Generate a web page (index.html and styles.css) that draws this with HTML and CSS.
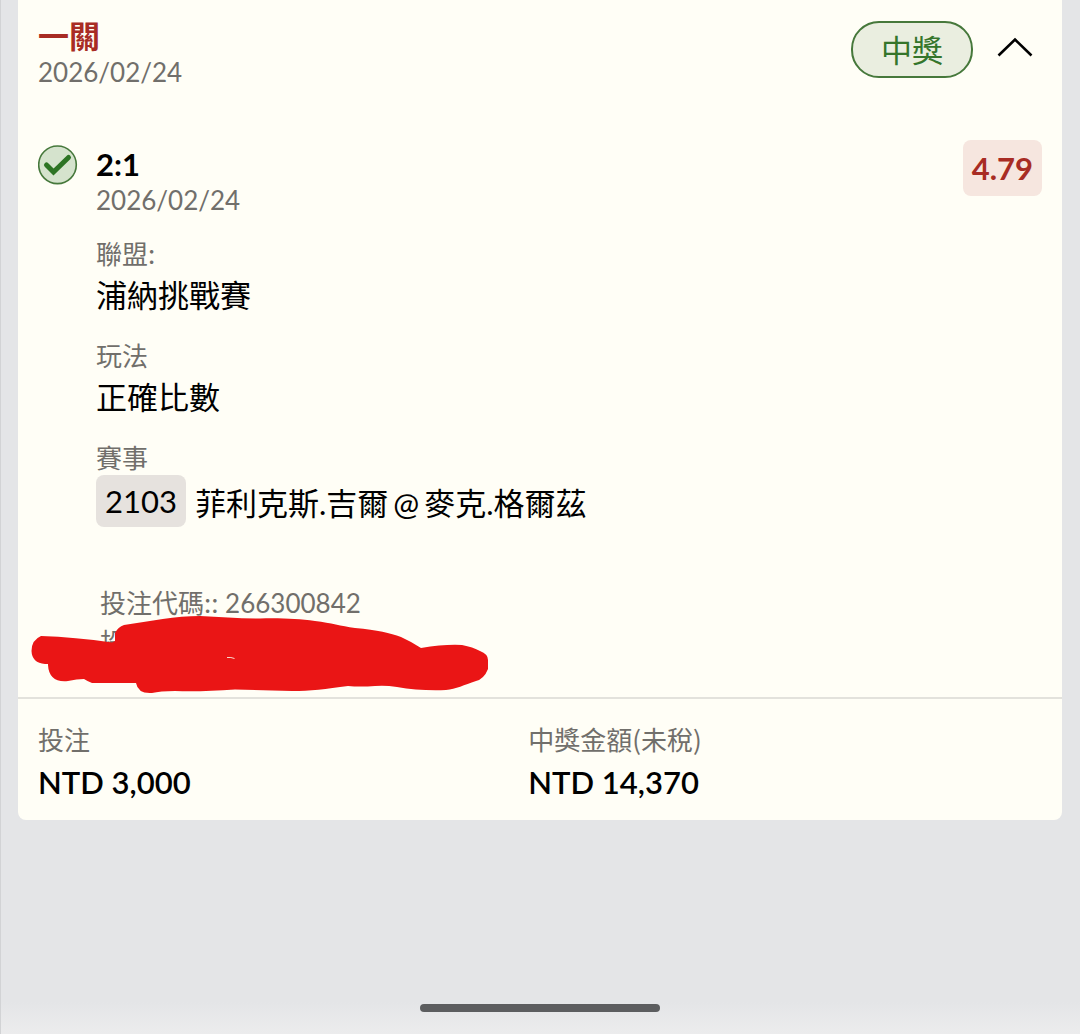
FILE: index.html
```html
<!DOCTYPE html>
<html lang="zh-Hant">
<head>
<meta charset="utf-8">
<meta name="viewport" content="width=device-width, initial-scale=1">
<title>投注紀錄</title>
<link rel="stylesheet" href="styles.css">
</head>
<body>
<main class="page">
  <article class="ticket">
    <header class="ticket-header">
      <div class="ticket-heading">
        <h1 class="ticket-title">一關</h1>
        <time class="muted" datetime="2026-02-24">2026/02/24</time>
      </div>
      <div class="ticket-actions">
        <span class="status">中獎</span>
        <button class="toggle" type="button" aria-label="收合" aria-expanded="true">
          <svg width="36" height="20" viewBox="0 0 36 20" aria-hidden="true"><path d="M1.500 18.500 18 2.500l16.500 16" fill="none" stroke="#000" stroke-width="2.600"/></svg>
        </button>
      </div>
    </header>

    <section class="selection">
      <svg class="check" width="40" height="40" viewBox="0 0 40 40" role="img" aria-label="中獎">
        <circle cx="19.500" cy="19.800" r="18.800" fill="#d5e3cd" stroke="#46783b" stroke-width="1.600"/>
        <path d="M8.500 20 15.500 27 30.500 12.500" fill="none" stroke="#2d7424" stroke-width="5" stroke-linecap="round"/>
      </svg>
      <div class="selection-body">
        <h2 class="pick">2:1</h2>
        <time class="muted" datetime="2026-02-24">2026/02/24</time>
        <dl class="details">
          <div class="detail">
            <dt class="muted label">聯盟:</dt>
            <dd class="value">浦納挑戰賽</dd>
          </div>
          <div class="detail">
            <dt class="muted label">玩法</dt>
            <dd class="value">正確比數</dd>
          </div>
          <div class="detail">
            <dt class="muted label">賽事</dt>
            <dd class="match">
              <span class="match-code">2103</span>
              <span class="players"><span>菲利克斯.吉爾</span> <span>@</span> <span>麥克.格爾茲</span></span>
            </dd>
          </div>
        </dl>
      </div>
      <span class="odds">4.79</span>
    </section>

    <section class="codes">
      <p class="code-line"><span class="label">投注代碼::</span> 266300842</p>
      <p class="code-line"><span class="label">投</span></p>
      <svg class="scribble" width="460" height="80" viewBox="30 615 460 80" aria-hidden="true">
        <path fill="#ea1515" d="M41 637 Q75 638 112 643.500 L115 642 L115 634 Q118 628 124 626 C150 622 176 617 200 617 C220 618 240 619.500 260 619.500 C284 619 298 620 315 622 C332 624 340 627 355 629 C378 631 390 634 401 638 Q412 643 421 649 Q445 645 462 646 Q473 648 480 652 Q488 655 488 661 V670 Q484 680 476 682 C464 686 456 690 446 691 Q420 692 397 688 Q385 686 375 687 Q360 688 348 687 C326 690 310 692 292 692 Q260 691 235 690.500 Q200 693 175 692 Q160 692 152 694 Q138 695 136 684 H92 Q87 682 84 680 Q77 680 68 682 Q49 684 48 666 V665 H45 Q32 664 31.500 652 Q31.500 641 41 637Z"/>
        <path d="M227 658.500q4-.5 7.500 1" fill="none" stroke="#fbd9cd"/>
      </svg>
    </section>

    <footer class="totals">
      <div>
        <div class="muted label">投注</div>
        <div class="amount">NTD 3,000</div>
      </div>
      <div>
        <div class="muted label">中獎金額(未稅)</div>
        <div class="amount">NTD 14,370</div>
      </div>
    </footer>
  </article>
  <div class="home-indicator"></div>
</main>
</body>
</html>
```
FILE: styles.css
```css
* {
  box-sizing: border-box;
}

body {
  margin: 0;
  background: #e4e5e7;
  color: #000;
  font-family: Lato, "Noto Sans CJK TC", sans-serif;
  font-size: 31px;
}

h1, h2, p, dl, dd {
  margin: 0;
}

.page {
  display: flex;
  flex-direction: column;
  min-height: 100vh;
  padding: 0 18px 22px 17px;
  border-left: 1px solid #d2d3d5;
  background: linear-gradient(to top, #ececed, #e4e5e7 32px);
}

.ticket {
  border-radius: 0 0 8px 8px;
  background: #fffef6;
}

.ticket-header {
  display: flex;
  justify-content: space-between;
  align-items: flex-start;
  padding: 18px 20px 0;
}

.ticket-title {
  color: #a82c24;
  font-size: 31px;
  font-weight: 700;
  line-height: 36px;
}

.muted {
  display: block;
  color: #716f6b;
  font-size: 26px;
  font-weight: 400;
  line-height: 36px;
}

.label {
  font-family: "Noto Sans CJK TC", sans-serif;
}

.ticket-actions {
  display: flex;
  align-items: center;
  gap: 24px;
  padding: 3px 9px 0 0;
}

.status {
  padding: 1px 28px 0;
  border: 2px solid #46783b;
  border-radius: 28px;
  background: #eaeee0;
  color: #35752b;
  line-height: 52px;
}

.toggle {
  display: flex;
  padding: 0 0 6px;
  border: 0;
  background: none;
  cursor: pointer;
}

.selection {
  display: flex;
  align-items: flex-start;
  padding: 50px 20px 0;
}

.check {
  flex: none;
  margin: 5px 18px 0 0;
}

.selection-body {
  flex: 1;
  padding-top: 6px;
}

.pick {
  font-size: 31px;
  font-weight: 700;
  line-height: 36px;
}

.odds {
  padding: 0 9px;
  border-radius: 8px;
  background: #f6e6df;
  color: #a82c24;
  font-weight: 700;
  line-height: 56px;
}

.details {
  display: flex;
  flex-direction: column;
  gap: 18px;
  padding-top: 17px;
}

.value {
  line-height: 48px;
}

.match {
  display: flex;
  align-items: flex-start;
  gap: 9px;
  line-height: 52px;
}

.match-code {
  padding: 0 9px;
  border-radius: 8px;
  background: #e6e2de;
}

.players {
  display: flex;
  gap: 5px;
  padding-top: 2px;
}

.codes {
  position: relative;
  padding: 54px 20px 36px 82px;
  border-bottom: 2px solid #e3e2dc;
}

.code-line {
  color: #716f6b;
  font-size: 26px;
  line-height: 38px;
}

.scribble {
  position: absolute;
  left: 12px;
  bottom: 3px;
}

.totals {
  display: grid;
  grid-template-columns: 21fr 22fr;
  padding: 22px 20px 13px;
}

.amount {
  font-weight: 600;
  line-height: 50px;
}

.home-indicator {
  width: 240px;
  height: 8px;
  margin: auto auto 0;
  border-radius: 4px;
  background: #5c5d5f;
}
```
